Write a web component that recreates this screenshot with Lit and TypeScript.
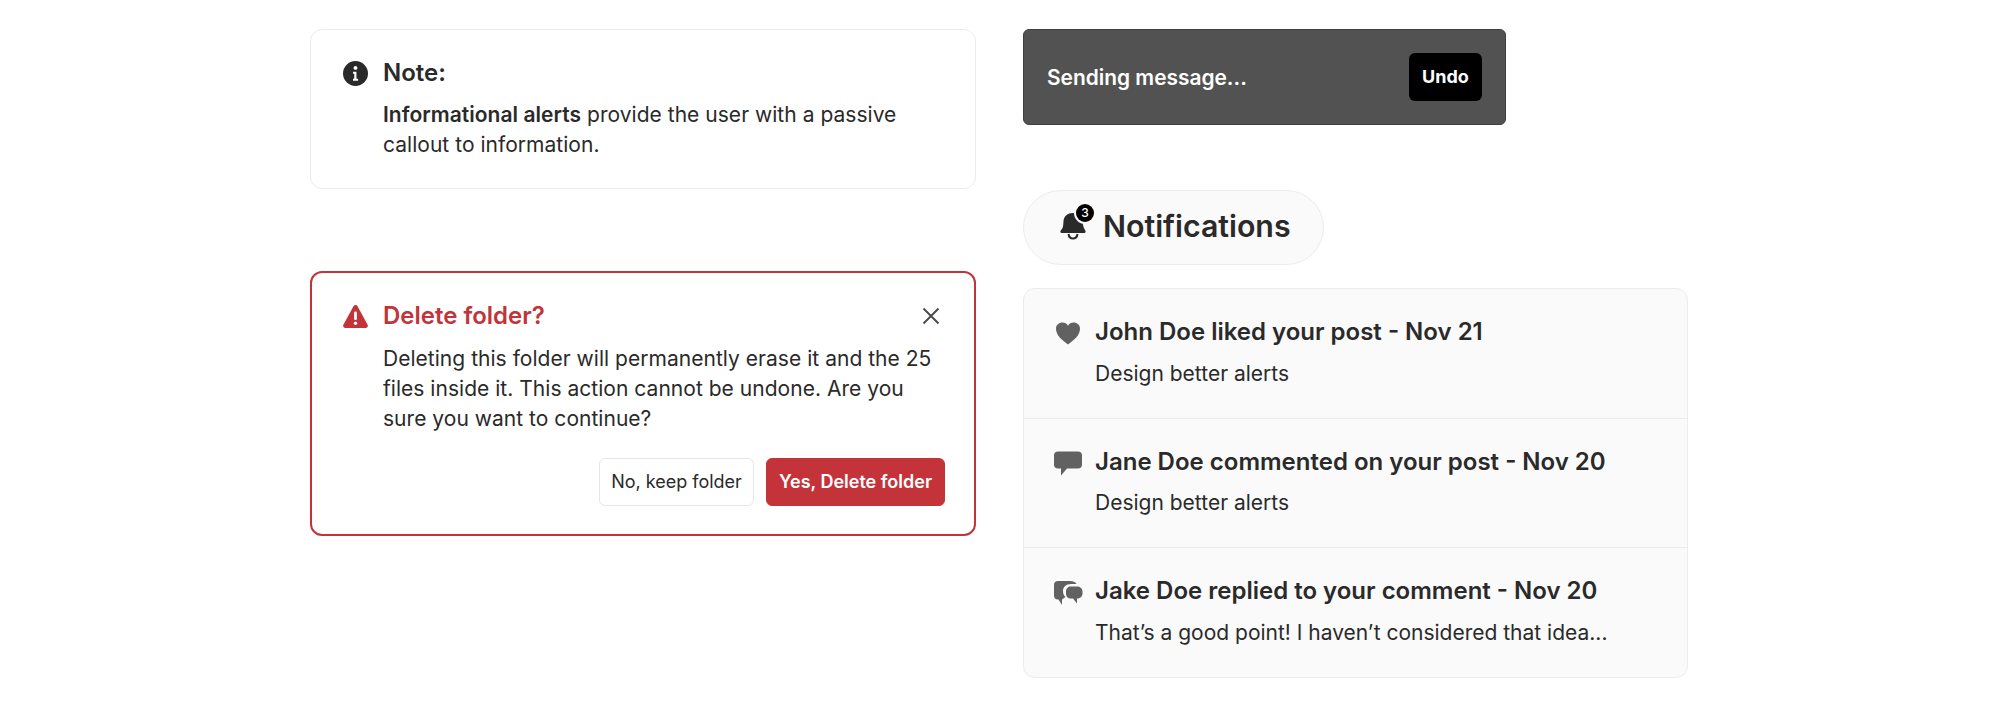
import { LitElement, html, css } from "lit";
import { customElement } from "lit/decorators.js";

@customElement("app-root")
export class AppRoot extends LitElement {
  static styles = css`
    :host { display: block; width: 2000px; height: 706px; background: #fff; overflow: hidden; font-family: Inter, "Liberation Sans", sans-serif; color: #2a2a2a; font-size: 21px; line-height: 30px; }
    * { box-sizing: border-box; }
    .page { display: flex; gap: 47px; padding: 29px 0 0 310px; align-items: flex-start; }
    .left { width: 666px; display: flex; flex-direction: column; gap: 82px; }
    .right { width: 665px; display: flex; flex-direction: column; align-items: flex-start; }
    .alert { border: 1.5px solid #ececec; border-radius: 12px; padding: 27px 30px 28px 32px; display: grid; grid-template-columns: 25px 1fr; column-gap: 15px; row-gap: 11px; background: #fff; }
    .alert.danger { border: 2px solid #c2333a; padding: 27px 29px 28px 31px; row-gap: 12px; }
    .ic { align-self: center; display: block; }
    .title { font-size: 24px; font-weight: 600; line-height: 32px; display: flex; justify-content: space-between; align-items: center; }
    .danger .title { color: #c2333a; }
    .body { grid-column: 2; letter-spacing: 0.03px; }
    .body b { font-weight: 600; }
    .close { margin-right: 5px; display: block; }
    .actions { grid-column: 1 / 3; display: flex; justify-content: flex-end; gap: 12px; margin-top: 12px; }
    .btn { font: inherit; font-size: 18px; line-height: 24px; height: 48px; padding: 0 11px; border-radius: 6px; border: 1.5px solid #e6e6e6; background: #fff; color: #2a2a2a; width: 155px; white-space: nowrap; }
    .btn.primary { background: #c5333a; border-color: #c5333a; color: #fff; font-weight: 600; padding: 0; width: 179px; }
    .toast { width: 483px; height: 96px; background: #525252; border: 1px solid #3f3f3f; border-radius: 6px; display: flex; align-items: center; justify-content: space-between; padding: 0 23px; color: #fff; font-weight: 600; margin-bottom: 65px; }
    .toast span { padding-top: 1px; font-size: 20.9px; }
    .undo { font: inherit; font-size: 18px; font-weight: 700; background: #000; color: #fff; border: 0; border-radius: 6px; height: 48px; width: 73px; padding: 0; }
    .pill { height: 75px; width: 301px; border-radius: 38px; background: #fafafa; border: 1.5px solid #ececec; display: flex; align-items: center; gap: 14px; padding-left: 35px; font-size: 30.3px; font-weight: 600; line-height: 40px; margin-bottom: 23px; }
    .pill-label { padding-bottom: 3px; }
    .bell { position: relative; width: 30px; height: 38px; display: block; }
    .bell svg { position: absolute; left: 1px; top: 4px; }
    .badge { position: absolute; top: -5px; left: 17px; width: 18px; height: 18px; border-radius: 50%; background: #000; box-shadow: 0 0 0 2px #fafafa; color: #fff; font-size: 12px; line-height: 18px; text-align: center; font-weight: 500; }
    .list { width: 665px; background: #fafafa; border: 1.5px solid #ececec; border-radius: 12px; }
    .row { display: grid; grid-template-columns: 30px 1fr; column-gap: 12px; row-gap: 8px; padding: 27px 30px 26px 29px; height: 129.5px; border-bottom: 1.5px solid #ececec; }
    .row:last-child { border-bottom: 0; height: 128.5px; }
    .row .ic { color: #616161; }
    .rt { font-size: 24px; font-weight: 600; line-height: 32px; }
    .rb { grid-column: 2; }
  `;

  render() {
    return html`<div class="page">
      <div class="left">
        <section class="alert">
          <svg class="ic" width="25" height="25" viewBox="0 0 24 24"><circle cx="12" cy="12" r="12" fill="#2a2a2a"/><circle cx="12" cy="6.6" r="1.9" fill="#fff"/><path d="M9.6 10.4h3.3v6.6h1.6v1.9H9.6V17h1.2v-4.7H9.6z" fill="#fff"/></svg>
          <div class="title">Note:</div>
          <div class="body"><b>Informational alerts</b> provide the user with a passive callout to information.</div>
        </section>
        <section class="alert danger">
          <svg class="ic" width="25" height="23" viewBox="0 0 25 23"><path d="M12.5 0c.8 0 1.5.4 1.9 1.1l10.2 18.6c.8 1.5-.2 3.3-1.9 3.3H2.300C.6 23-.4 21.200.4 19.700L10.600 1.100C11 .4 11.700 0 12.500 0z" fill="#c2333a"/><rect x="11.100" y="6.500" width="2.800" height="8.500" rx="1.200" fill="#fff"/><circle cx="12.500" cy="18.200" r="1.700" fill="#fff"/></svg>
          <div class="title"><span>Delete folder?</span><svg class="close" width="18" height="18" viewBox="0 0 18 18"><path d="M1.500 1.500l15 15M16.500 1.500l-15 15" stroke="#4a4a4a" stroke-width="1.900" fill="none"/></svg></div>
          <div class="body">Deleting this folder will permanently erase it and the 25 files inside it. This action cannot be undone. Are you sure you want to continue?</div>
          <div class="actions"><button class="btn">No, keep folder</button><button class="btn primary">Yes, Delete folder</button></div>
        </section>
      </div>
      <div class="right">
        <div class="toast"><span>Sending message...</span><button class="undo">Undo</button></div>
        <div class="pill">
          <span class="bell">
            <svg width="26" height="28" viewBox="0 0 26 28"><path d="M13 0c5.500 0 9 3 9.500 8 .4 4.500 1 7 2.800 9.500.7 1 .2 2.500-1 2.500H1.700c-1.200 0-1.700-1.500-1-2.500C3.500 15 3.100 12.500 3.500 8 4 3 7.500 0 13 0z" fill="#2a2a2a"/><path d="M8.500 21c.4 3 2.200 4.500 4.500 4.500s4.100-1.500 4.500-4.500" fill="none" stroke="#2a2a2a" stroke-width="2"/></svg>
            <span class="badge">3</span>
          </span>
          <span class="pill-label">Notifications</span>
        </div>
        <div class="list">
          <div class="row">
            <svg class="ic" width="30" height="28" viewBox="0 0 30 28"><path d="M15 25.500C9 21 3 16.500 3 9.500 3 6 6 3.500 9.500 3.500c2.300 0 4.300 1.200 5.500 3.200 1.200-2 3.200-3.200 5.500-3.200C24 3.500 27 6 27 9.500 27 16.500 21 21 15 25.500z" fill="currentColor"/></svg>
            <div class="rt">John Doe liked your post - Nov 21</div>
            <div class="rb">Design better alerts</div>
          </div>
          <div class="row">
            <svg class="ic" width="30" height="28" viewBox="0 0 30 28"><path d="M5 2.500h20c2.500 0 4 1.500 4 4v9c0 2.500-1.500 4-4 4H14l-6 7v-7H5c-2.500 0-4-1.500-4-4v-9c0-2.500 1.500-4 4-4z" fill="currentColor"/></svg>
            <div class="rt">Jane Doe commented on your post - Nov 20</div>
            <div class="rb">Design better alerts</div>
          </div>
          <div class="row">
            <svg class="ic" width="30" height="28" viewBox="0 0 30 28"><path d="M5 3h12c3 0 5.500 1 6.500 3H18c-5 0-8 3-8 7 0 2.500.8 4.500 2.500 6L9 21.500V27l-3.500-5.500H5c-2.500 0-4-1.500-4-4V7c0-2.500 1.500-4 4-4z" fill="currentColor"/><path d="M18 8.500h6c3 0 5.500 2 5.500 5v2c0 3-2.500 5-5.500 5v5l-4-5h-2c-3 0-5-2-5-5v-2c0-3 2-5 5-5z" fill="currentColor"/></svg>
            <div class="rt">Jake Doe replied to your comment - Nov 20</div>
            <div class="rb">That’s a good point! I haven’t considered that idea...</div>
          </div>
        </div>
      </div>
    </div>`;
  }
}
